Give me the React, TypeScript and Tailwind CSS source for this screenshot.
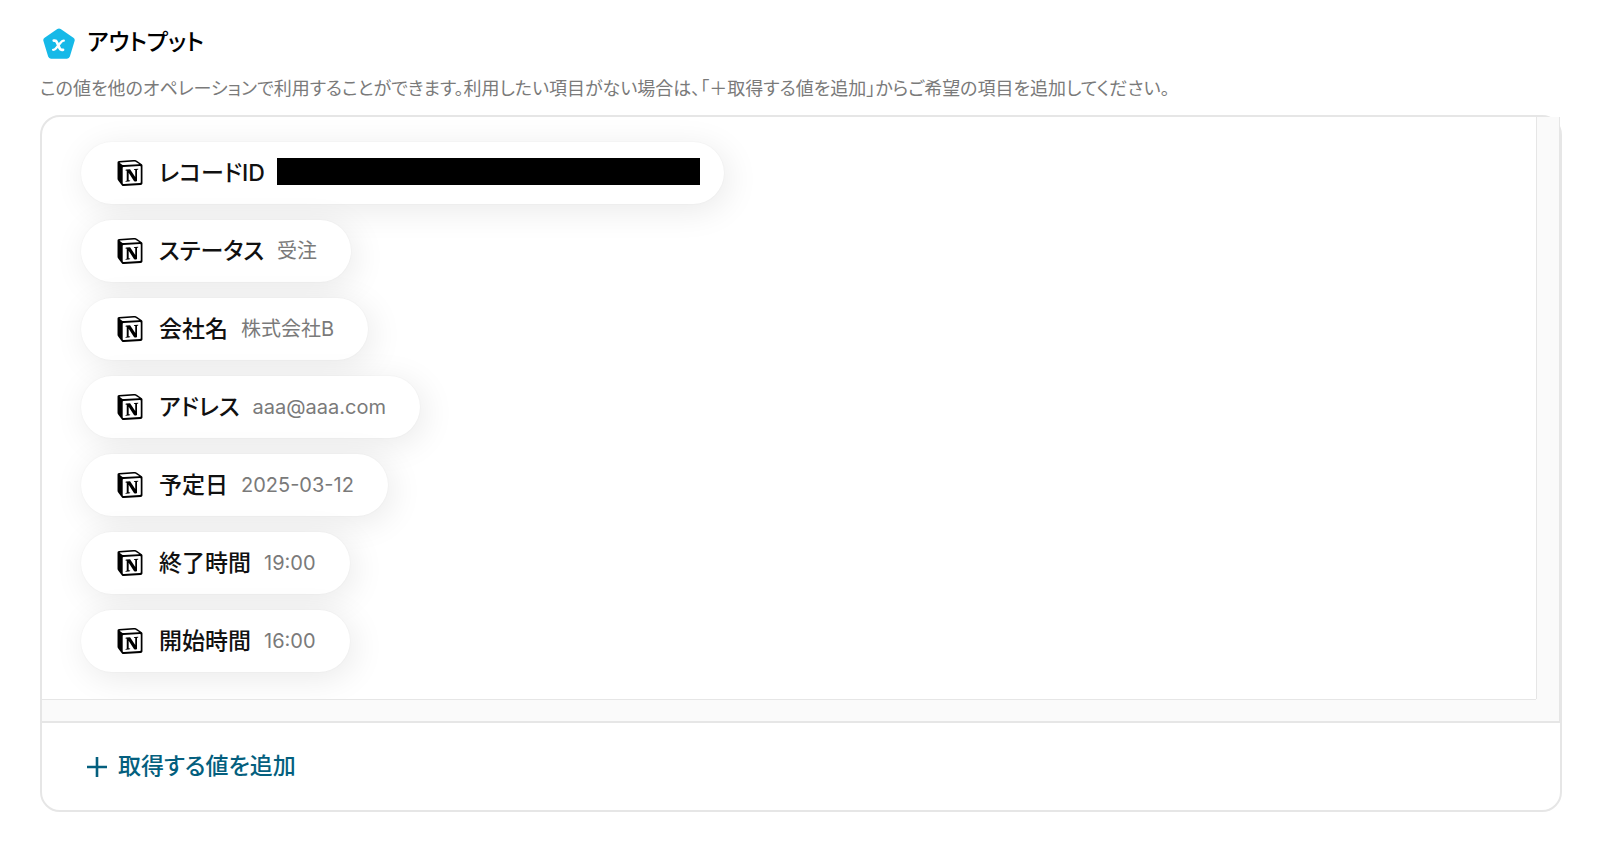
import React from "react";
import { SiNotion } from "react-icons/si";

type outputItem = {
   label: string;
   value?: string;
};

const items: outputItem[] = [
   { label: "レコードID" },
   { label: "ステータス", value: "受注" },
   { label: "会社名", value: "株式会社B" },
   { label: "アドレス", value: "aaa@aaa.com" },
   { label: "予定日", value: "2025-03-12" },
   { label: "終了時間", value: "19:00" },
   { label: "開始時間", value: "16:00" },
];

function OutputIcon(): JSX.Element {
   return (
      <svg viewBox="0 0 32 34" className="h-[34px] w-8" aria-hidden="true">
         <path
            d="M16 6.5 28.7 15.2 24 30.7H8L3.3 15.2Z"
            fill="#16b9e8"
            stroke="#16b9e8"
            strokeWidth="6"
            strokeLinejoin="round"
         />
         <path
            d="M10.8 15.6h1c1.2 0 1.6.4 2.1 1.6l2.7 6c.5 1.2 1 1.6 2.2 1.6h1.2"
            fill="none"
            stroke="#fff"
            strokeWidth="2.8"
            strokeLinecap="round"
         />
         <path
            d="M20.8 15.7c-1.2 0-1.8.3-2.6 1.3l-5.4 6.4c-.9 1.1-1.5 1.4-2.7 1.4"
            fill="none"
            stroke="#fff"
            strokeWidth="2.3"
            strokeLinecap="round"
         />
      </svg>
   );
}

function OutputPill({ label, value }: outputItem): JSX.Element {
   return (
      <li className="flex h-[62px] items-center rounded-full bg-white pr-[34px] pl-9 shadow-[4px_6px_34px_rgba(0,0,0,0.09),0_0_2px_rgba(0,0,0,0.05)]">
         <SiNotion className="h-[26px] w-[26px] shrink-0 text-black" />
         <span className="ml-4 text-[23px] font-medium text-[#111]">{label}</span>
         {value ? (
            <span className="ml-[13px] text-[20px] text-[#7a7a7a]">{value}</span>
         ) : (
            <span className="-mr-[10px] mb-1 ml-3 h-[27px] w-[423px] bg-black" />
         )}
      </li>
   );
}

export default function App(): JSX.Element {
   return (
      <main className="min-h-screen overflow-hidden bg-white px-10 pt-6 pb-9 font-['Inter','Noto_Sans_CJK_JP',sans-serif] [font-feature-settings:'palt']">
         <header>
            <div className="flex h-9 items-center gap-3 pl-[3px]">
               <OutputIcon />
               <h1 className="text-[23px] font-medium text-black">アウトプット</h1>
            </div>
            <p className="mt-[15px] text-[18px] leading-7 text-[#7a7a7a]">
               この値を他のオペレーションで利用することができます。利用したい項目がない場合は、「＋取得する値を追加」からご希望の項目を追加してください。
            </p>
         </header>
         <section className="-mr-0.5 mt-3 rounded-[20px] border-2 border-[#e6e6e6]">
            <div className="border-b-2 border-[#e6e6e6]">
               <div className="flex">
                  <ul className="flex min-w-0 flex-1 flex-col items-start gap-4 overflow-hidden pt-[25px] pb-[27px] pl-[39px]">
                     {items.map((item) => (
                        <OutputPill key={item.label} {...item} />
                     ))}
                  </ul>
                  <div className="w-6 border-x border-[#e6e6e6] bg-[#fafafa]" />
               </div>
               <div className="flex h-[22px] bg-[#fafafa]">
                  <div className="flex-1 border-t border-[#e6e6e6]" />
                  <div className="w-6 border-r border-[#e6e6e6]" />
               </div>
            </div>
            <button
               type="button"
               className="flex h-[87px] w-full items-center gap-[10px] pl-11 text-[23px] font-medium text-[#045f7e]"
            >
               <svg viewBox="0 0 22 22" className="h-[22px] w-[22px]" aria-hidden="true">
                  <path d="M11 1v20M1 11h20" stroke="currentColor" strokeWidth="2.6" />
               </svg>
               取得する値を追加
            </button>
         </section>
      </main>
   );
}
